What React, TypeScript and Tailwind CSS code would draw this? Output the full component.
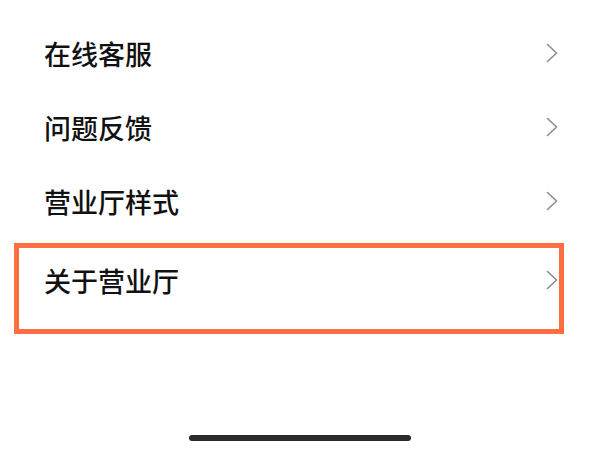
import React from 'react';

const items = ['在线客服', '问题反馈', '营业厅样式'];

function Chevron() {
  return (
    <svg width="12" height="20" viewBox="0 0 12 20" fill="none" className="shrink-0">
      <path d="M1.5 1.5 L10.5 10 L1.5 18.5" stroke="#8c8c8c" strokeWidth="1.6" strokeLinecap="round" strokeLinejoin="round" />
    </svg>
  );
}

function Row({ label }: { label: string }) {
  return (
    <div className="flex items-center justify-between h-[74px] cursor-pointer">
      <span className="text-[27px] font-medium text-[#111111] leading-none">{label}</span>
      <Chevron />
    </div>
  );
}

export default function App() {
  return (
    <div
      className="w-[600px] h-[450px] bg-white flex flex-col overflow-hidden"
      style={{ fontFamily: '"Noto Sans CJK SC", "Noto Sans", sans-serif' }}
    >
      <div className="pt-[16px] pl-[44px] pr-[42px]">
        {items.map((label) => (
          <Row key={label} label={label} />
        ))}
      </div>

      {/* highlighted row */}
      <div className="mt-[5px] mx-[14px] mr-[36px] border-[5px] border-[#ff6f41] pb-[17px]">
        <div className="flex items-center justify-between h-[64px] pl-[25px] pr-[1px]">
          <span className="text-[27px] font-medium text-[#111111] leading-none">关于营业厅</span>
          <Chevron />
        </div>
      </div>

      <div className="flex-1" />
      <div className="flex justify-center pb-[9px]">
        <div className="w-[222px] h-[6px] rounded-full bg-[#2b2b2b]" />
      </div>
    </div>
  );
}
